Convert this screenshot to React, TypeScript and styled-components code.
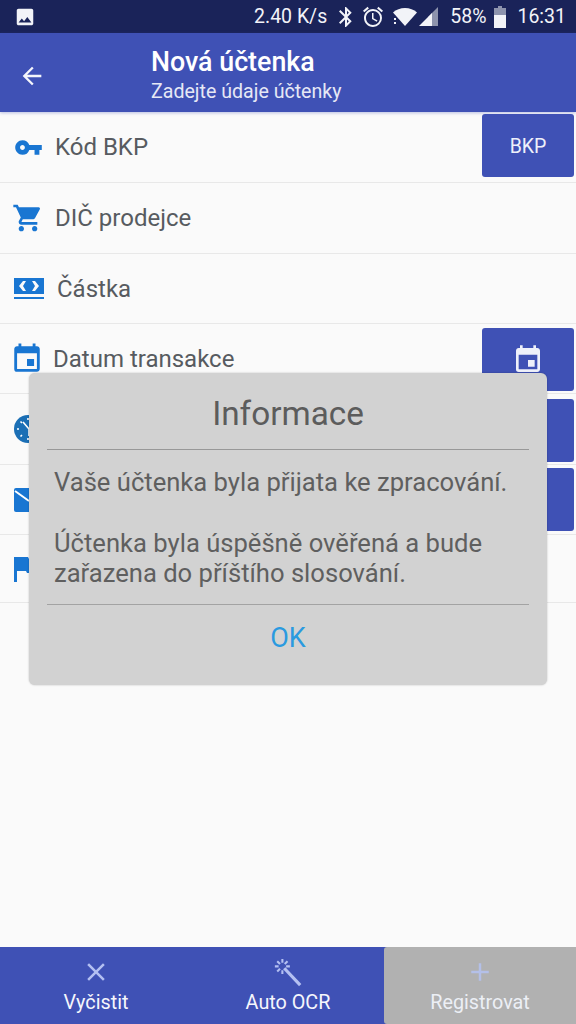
import React from 'react';
import styled, { createGlobalStyle } from 'styled-components';
import { MdArrowBack, MdBluetooth, MdEvent, MdShoppingCart, MdVpnKey, MdAccessAlarm, MdPhoto, MdClose, MdAdd } from 'react-icons/md';

const GlobalStyle = createGlobalStyle`
  html, body {
    margin: 0;
    padding: 0;
    background: #fafafa;
  }
  body {
    font-family: Roboto, "Liberation Sans", sans-serif;
  }
`;

const Screen = styled.div`
  position: relative;
  width: 576px;
  height: 1024px;
  display: flex;
  flex-direction: column;
  overflow: hidden;
  background: #fafafa;
`;

const StatusBar = styled.div`
  height: 33px;
  flex: none;
  background: #1a2359;
  color: #f2f3f8;
  display: flex;
  align-items: center;
  padding: 0 10px 0 14px;
  font-size: 19.5px;
`;

const StatusRight = styled.div`
  margin-left: auto;
  display: flex;
  align-items: center;
`;

const StatusItem = styled.span<{ $ml?: number }>`
  margin-left: ${p => p.$ml ?? 0}px;
  white-space: nowrap;
  display: flex;
`;

const Header = styled.header`
  height: 79px;
  flex: none;
  box-sizing: border-box;
  padding: 6px 0 0 18px;
  background: #3f51b5;
  color: #fff;
  display: flex;
  align-items: center;
  box-shadow: 0 1px 3px rgba(63, 81, 181, 0.35);
  z-index: 1;
`;

const BackButton = styled.div`
  width: 28px;
  height: 28px;
  display: flex;
  color: #f4f5fb;
`;

const Titles = styled.div`
  margin-left: 105px;
  display: flex;
  flex-direction: column;
`;

const Title = styled.div`
  font-size: 26.8px;
  font-weight: 500;
  line-height: 32px;
`;

const Subtitle = styled.div`
  font-size: 19.6px;
  line-height: 28px;
  color: #e6e8f5;
`;

const List = styled.div`
  flex: 1;
  display: flex;
  flex-direction: column;
`;

const Row = styled.div<{ $height: number }>`
  height: ${p => p.$height}px;
  flex: none;
  box-sizing: border-box;
  border-bottom: 1px solid #e8e8e8;
  display: flex;
  align-items: center;
  padding: 0 2px 0 14px;
`;

const RowIcon = styled.div<{ $w?: number; $bleed?: number }>`
  width: ${p => p.$w ?? 28}px;
  height: 28px;
  flex: none;
  display: flex;
  align-items: center;
  justify-content: center;
  color: #1976d2;

  svg {
    flex: none;
    width: ${p => (p.$w ?? 28) + (p.$bleed ?? 0)}px;
    height: ${p => 28 + (p.$bleed ?? 0)}px;
  }
`;

const Label = styled.span<{ $gap: number }>`
  margin-left: ${p => p.$gap}px;
  font-size: 24px;
  color: #575b60;
  white-space: nowrap;
`;

const RowButton = styled.div<{ $top: number }>`
  margin-left: auto;
  align-self: flex-start;
  margin-top: ${p => p.$top}px;
  width: 92px;
  height: 63px;
  box-sizing: border-box;
  padding-top: 1px;
  border-radius: 3px;
  background: #3f51b5;
  color: #eef0fa;
  font-size: 19.5px;
  display: flex;
  align-items: center;
  justify-content: center;
`;

const Dialog = styled.div`
  position: absolute;
  left: 29px;
  top: 373px;
  width: 518px;
  height: 312px;
  box-sizing: border-box;
  padding: 0 18px;
  background: #d2d2d2;
  border-radius: 6px;
  box-shadow: 0 0 2px rgba(0, 0, 0, 0.25);
  display: flex;
  flex-direction: column;
  z-index: 2;
`;

const DialogTitle = styled.div`
  height: 77px;
  flex: none;
  box-sizing: border-box;
  padding-top: 4px;
  border-bottom: 1px solid #989898;
  font-size: 33.3px;
  color: #5c5c5c;
  display: flex;
  align-items: center;
  justify-content: center;
`;

const DialogBody = styled.div`
  height: 155px;
  flex: none;
  box-sizing: border-box;
  padding: 17px 7px 0;
  border-bottom: 1px solid #a3a3a3;
  font-size: 25.6px;
  line-height: 30px;
  color: #5f5f5f;
`;

const Paragraph = styled.p`
  margin: 0 0 31px;
  white-space: nowrap;
`;

const OkButton = styled.div`
  height: 66px;
  display: flex;
  align-items: center;
  justify-content: center;
  font-size: 27px;
  color: #2a9ae0;
`;

const BottomBar = styled.nav`
  height: 77px;
  flex: none;
  display: flex;
  background: #3f51b5;
`;

const BarButton = styled.div<{ $disabled?: boolean }>`
  width: 192px;
  display: flex;
  flex-direction: column;
  align-items: center;
  padding-top: 10px;
  box-sizing: border-box;
  background: ${p => (p.$disabled ? '#b1b1b1' : 'transparent')};
  border-radius: ${p => (p.$disabled ? '3px 0 0 3px' : '0')};
  color: ${p => (p.$disabled ? '#eceff5' : '#f5f6fc')};
  font-size: 19.8px;
`;

const BarIcon = styled.div<{ $disabled?: boolean }>`
  width: 30px;
  height: 30px;
  display: flex;
  color: ${p => (p.$disabled ? '#b4c0e8' : '#b4c0f2')};
  margin-bottom: 4px;
`;

const Full = { width: '100%', height: '100%' };

const MoneyIcon = () => (
  <svg viewBox="0 0 30 24">
    <rect y="1" width="30" height="16" fill="currentColor" />
    <path fill="#fafafa" d="M5 9l4-5h3l-3 5 3 5H9z M25 9l-4-5h-3l3 5-3 5h3z" />
    <rect y="20" width="30" height="2" fill="currentColor" />
  </svg>
);

const ClockIcon = () => (
  <svg viewBox="0 0 28 28">
    <circle cx="14" cy="14" r="14" fill="#1b6fb5" />
    <path d="M14 3v2M3 14h2M6.500 6.500l1.500 1.500M6.500 21.500L8 20M14 23v2" stroke="#fff" strokeWidth="1.600" />
    <path d="M9 7l6 7v7" fill="none" stroke="#fff" strokeWidth="1.600" />
  </svg>
);

const MailIcon = () => (
  <svg viewBox="0 0 28 28">
    <rect y="2" width="28" height="24" rx="2" fill="currentColor" />
    <path d="M1 5l14 10" stroke="#fff" strokeWidth="2" fill="none" />
  </svg>
);

const FlagIcon = () => (
  <svg viewBox="0 0 28 28">
    <path fill="currentColor" d="M0 2h14l1 2h13v14H13l-1-2H3v11H0z" />
  </svg>
);

const WifiIcon = () => (
  <svg viewBox="0 0 25 20" width="25" height="20">
    <path fill="currentColor" d="M1 5.500C4 2.500 8.500 1 13 1s9 1.500 12 4.500L13 19z" />
    <path fill="currentColor" d="M2 11h2v2H2z M2 15h2v2H2z" />
  </svg>
);

const SignalIcon = () => (
  <svg viewBox="0 0 19 19" width="19" height="19">
    <path fill="#8d93ad" d="M19 0v19H9V10z" />
    <path fill="currentColor" d="M13 6v13H0z" />
  </svg>
);

const BatteryIcon = () => (
  <svg viewBox="0 0 12 22" width="12" height="22">
    <path fill="#8d93ad" d="M4 0h4v2h4v8H0V2h4z" />
    <rect y="9" width="12" height="13" fill="currentColor" />
  </svg>
);

const WandIcon = () => (
  <svg viewBox="0 0 32 32" style={Full}>
    <path d="M12 12l17 18" stroke="currentColor" strokeWidth="3.400" fill="none" />
    <path d="M10 2v4M10 14v4M2 10h4M14 10h4M4.500 4.500L7.500 7.500M15.500 4.500L12.500 7.500M4.500 15.500L7.500 12.500" stroke="currentColor" strokeWidth="2.200" fill="none" />
  </svg>
);

export default function App() {
  return (
    <Screen>
      <GlobalStyle />
      <StatusBar>
        <MdPhoto size={22} />
        <StatusRight>
          <StatusItem>2.40 K/s</StatusItem>
          <StatusItem $ml={7}><MdBluetooth size={24} /></StatusItem>
          <StatusItem $ml={3}><MdAccessAlarm size={24} /></StatusItem>
          <StatusItem $ml={7}><WifiIcon /></StatusItem>
          <StatusItem $ml={2}><SignalIcon /></StatusItem>
          <StatusItem $ml={12}>58%</StatusItem>
          <StatusItem $ml={8}><BatteryIcon /></StatusItem>
          <StatusItem $ml={11}>16:31</StatusItem>
        </StatusRight>
      </StatusBar>
      <Header>
        <BackButton><MdArrowBack style={Full} /></BackButton>
        <Titles>
          <Title>Nová účtenka</Title>
          <Subtitle>Zadejte údaje účtenky</Subtitle>
        </Titles>
      </Header>
      <List>
        <Row $height={71}>
          <RowIcon $bleed={1}><MdVpnKey /></RowIcon>
          <Label $gap={13}>Kód BKP</Label>
          <RowButton $top={2}>BKP</RowButton>
        </Row>
        <Row $height={71}>
          <RowIcon $bleed={4}><MdShoppingCart /></RowIcon>
          <Label $gap={13}>DIČ prodejce</Label>
        </Row>
        <Row $height={70}>
          <RowIcon $w={30}><MoneyIcon /></RowIcon>
          <Label $gap={13}>Částka</Label>
        </Row>
        <Row $height={70}>
          <RowIcon $w={26} $bleed={8}><MdEvent /></RowIcon>
          <Label $gap={13}>Datum transakce</Label>
          <RowButton $top={4}><MdEvent size={32} /></RowButton>
        </Row>
        <Row $height={71}>
          <RowIcon><ClockIcon /></RowIcon>
          <RowButton $top={5} />
        </Row>
        <Row $height={70}>
          <RowIcon><MailIcon /></RowIcon>
          <RowButton $top={3} />
        </Row>
        <Row $height={68}>
          <RowIcon><FlagIcon /></RowIcon>
        </Row>
      </List>
      <Dialog>
        <DialogTitle>Informace</DialogTitle>
        <DialogBody>
          <Paragraph>Vaše účtenka byla přijata ke zpracování.</Paragraph>
          <Paragraph>Účtenka byla úspěšně ověřená a bude<br />zařazena do příštího slosování.</Paragraph>
        </DialogBody>
        <OkButton>OK</OkButton>
      </Dialog>
      <BottomBar>
        <BarButton>
          <BarIcon><MdClose style={Full} /></BarIcon>
          Vyčistit
        </BarButton>
        <BarButton>
          <BarIcon><WandIcon /></BarIcon>
          Auto OCR
        </BarButton>
        <BarButton $disabled>
          <BarIcon $disabled><MdAdd style={Full} /></BarIcon>
          Registrovat
        </BarButton>
      </BottomBar>
    </Screen>
  );
}
